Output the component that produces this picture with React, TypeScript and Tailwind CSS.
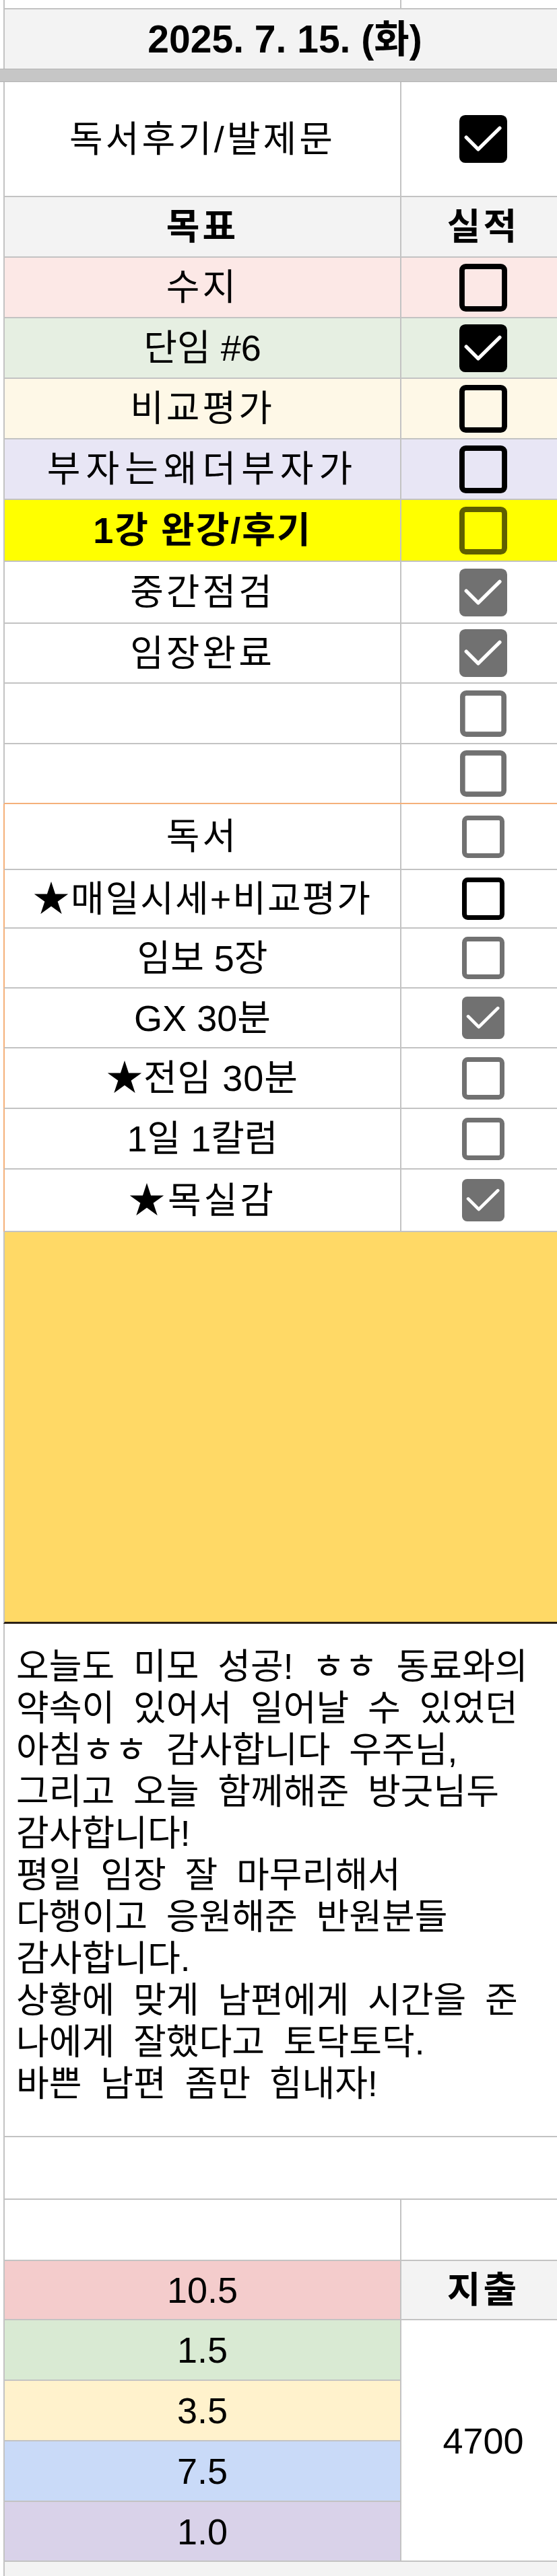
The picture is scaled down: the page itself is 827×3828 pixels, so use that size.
import type { ReactNode } from 'react'

type BoxProps = { checked?: boolean; tone: string; size?: string }

function Box({ checked, tone, size = 'h-[71px] w-[71px]' }: BoxProps) {
  return (
    <svg viewBox="0 0 18 18" className={`${size} ${tone}`}>
      {checked ? (
        <>
          <rect x="0" y="0" width="18" height="18" rx="2.2" fill="currentColor" />
          <path
            d="M2.6 8.4 L7.1 12.9 L15.2 4.9"
            fill="none"
            stroke="white"
            strokeWidth="1.35"
            strokeLinecap="round"
            strokeLinejoin="round"
          />
        </>
      ) : (
        <rect x="1" y="1" width="16" height="16" rx="1.4" fill="none" stroke="currentColor" strokeWidth="2" />
      )}
    </svg>
  )
}

type RowProps = {
  h: string
  bg?: string
  edge?: string
  bottom?: string
  left?: ReactNode
  right?: ReactNode
}

function Row({ h, bg = 'bg-white', edge = 'border-l-[#c3c3c3]', bottom = 'border-b-[#c3c3c3]', left, right }: RowProps) {
  return (
    <div className={`ml-[5px] flex border-b-2 border-l-2 ${h} ${bg} ${edge} ${bottom}`}>
      <div className="flex w-[589px] shrink-0 items-center justify-center border-r-2 border-r-[#c3c3c3]">
        {left}
      </div>
      <div className="flex w-[243px] shrink-0 items-center justify-center">{right}</div>
    </div>
  )
}

const label = 'text-[54px] leading-none text-black whitespace-nowrap'
const ko = 'text-[54px] leading-none text-black whitespace-nowrap tracking-[4px]'
const orange = 'border-l-[#f5b07a]'
const small = 'h-[63px] w-[63px]'

const note = [
  '오늘도 미모 성공! ㅎㅎ 동료와의',
  '약속이 있어서 일어날 수 있었던',
  '아침ㅎㅎ 감사합니다 우주님,',
  '그리고 오늘 함께해준 방긋님두',
  '감사합니다!',
  '평일 임장 잘 마무리해서',
  '다행이고 응원해준 반원분들',
  '감사합니다.',
  '상황에 맞게 남편에게 시간을 준',
  '나에게 잘했다고 토닥토닥.',
  '바쁜 남편 좀만 힘내자!',
]

export default function App() {
  return (
    <div className="w-[827px] overflow-hidden bg-white font-['Liberation_Sans','Noto_Sans_CJK_KR',sans-serif] text-black">
      <Row h="h-[14px]" />

      <div className="ml-[5px] flex h-[88px] w-[834px] items-center justify-center border-l-2 border-l-[#c3c3c3] bg-[#f3f3f3]">
        <span className="text-[57px] font-bold leading-none whitespace-nowrap">2025. 7. 15. (화)</span>
      </div>
      <div className="h-[20px] w-full border-y border-[#b3b3b3] bg-[#c6c6c6]" />

      <Row
        h="h-[171px]"
        left={<span className={ko}>독서후기/발제문</span>}
        right={<Box checked tone="text-black" />}
      />
      <Row
        h="h-[90px]"
        bg="bg-[#f3f3f3]"
        left={<span className={`${ko} font-bold`}>목표</span>}
        right={<span className={`${ko} font-bold`}>실적</span>}
      />
      <Row h="h-[90px]" bg="bg-[#fce8e6]" left={<span className={ko}>수지</span>} right={<Box tone="text-black" />} />
      <Row h="h-[90px]" bg="bg-[#e6efe2]" left={<span className={label}>단임 #6</span>} right={<Box checked tone="text-black" />} />
      <Row h="h-[90px]" bg="bg-[#fef8e7]" left={<span className={ko}>비교평가</span>} right={<Box tone="text-black" />} />
      <Row
        h="h-[90px]"
        bg="bg-[#e8e6f5]"
        left={<span className={`${label} tracking-[8px]`}>부자는왜더부자가</span>}
        right={<Box tone="text-black" />}
      />
      <Row
        h="h-[92px]"
        bg="bg-[#ffff00]"
        left={<span className={`${label} font-bold tracking-[2px]`}>1강 완강/후기</span>}
        right={<Box tone="text-[#5f5f00]" />}
      />
      <Row h="h-[92px]" left={<span className={ko}>중간점검</span>} right={<Box checked tone="text-[#717171]" />} />
      <Row h="h-[89px]" left={<span className={ko}>임장완료</span>} right={<Box checked tone="text-[#717171]" />} />
      <Row h="h-[90px]" right={<Box tone="text-[#717171]" size="h-[69px] w-[69px]" />} />
      <Row h="h-[89px]" bottom="border-b-[#f5b07a]" right={<Box tone="text-[#717171]" size="h-[69px] w-[69px]" />} />

      <Row h="h-[98px]" edge={orange} left={<span className={ko}>독서</span>} right={<Box tone="text-[#717171]" size={small} />} />
      <Row
        h="h-[87px]"
        edge={orange}
        left={<span className={`${label} tracking-[2px]`}>★매일시세+비교평가</span>}
        right={<Box tone="text-black" size={small} />}
      />
      <Row h="h-[89px]" edge={orange} left={<span className={label}>임보 5장</span>} right={<Box tone="text-[#717171]" size={small} />} />
      <Row
        h="h-[89px]"
        edge={orange}
        left={<span className={label}>GX 30분</span>}
        right={<Box checked tone="text-[#717171]" size={small} />}
      />
      <Row
        h="h-[90px]"
        edge={orange}
        left={<span className={`${label} tracking-[1px]`}>★전임 30분</span>}
        right={<Box tone="text-[#717171]" size={small} />}
      />
      <Row h="h-[90px]" edge={orange} left={<span className={label}>1일 1칼럼</span>} right={<Box tone="text-[#717171]" size={small} />} />
      <Row
        h="h-[93px]"
        edge={orange}
        left={<span className={ko}>★목실감</span>}
        right={<Box checked tone="text-[#717171]" size={small} />}
      />

      <div className="ml-[5px] h-[582px] border-b-[3px] border-l-2 border-b-[#2a2116] border-l-[#c3c3c3] bg-[#ffd966]" />

      <div className="ml-[5px] h-[763px] border-b-2 border-l-2 border-[#c3c3c3] pl-[17px] pt-[33px]">
        {note.map((line, i) => (
          <div key={i} className="h-[62px] whitespace-nowrap text-[53px] leading-[62px] [word-spacing:13px]">
            {line}
          </div>
        ))}
      </div>

      <div className="ml-[5px] h-[93px] border-b-2 border-l-2 border-[#c3c3c3]" />
      <Row h="h-[91px]" />

      <div className="ml-[5px] flex border-l-2 border-l-[#c3c3c3]">
        <div className="flex w-[589px] shrink-0 flex-col border-r-2 border-r-[#c3c3c3]">
          <div className="flex h-[88px] items-center justify-center border-b-2 border-[#c3c3c3] bg-[#f4cccc]">
            <span className={label}>10.5</span>
          </div>
          <div className="flex h-[90px] items-center justify-center border-b-2 border-[#c3c3c3] bg-[#d9ead3]">
            <span className={label}>1.5</span>
          </div>
          <div className="flex h-[90px] items-center justify-center border-b-2 border-[#c3c3c3] bg-[#fff2cc]">
            <span className={label}>3.5</span>
          </div>
          <div className="flex h-[90px] items-center justify-center border-b-2 border-[#c3c3c3] bg-[#c9daf8]">
            <span className={label}>7.5</span>
          </div>
          <div className="flex h-[89px] items-center justify-center border-b-2 border-[#c3c3c3] bg-[#d9d2e9]">
            <span className={label}>1.0</span>
          </div>
        </div>
        <div className="flex w-[243px] shrink-0 flex-col">
          <div className="flex h-[88px] items-center justify-center border-b-2 border-[#c3c3c3] bg-[#f3f3f3]">
            <span className={`${ko} font-bold`}>지출</span>
          </div>
          <div className="flex h-[359px] items-center justify-center border-b-2 border-[#c3c3c3]">
            <span className={label}>4700</span>
          </div>
        </div>
      </div>
      <div className="ml-[5px] h-[21px] border-l-2 border-l-[#c3c3c3] bg-[#f3f3f3]" />
    </div>
  )
}
